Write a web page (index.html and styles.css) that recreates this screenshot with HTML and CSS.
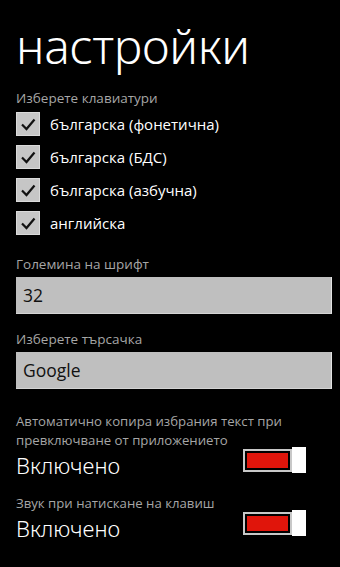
FILE: index.html
```html
<!DOCTYPE html>
<html lang="bg">
<head>
    <meta charset="UTF-8">
    <meta name="viewport" content="width=device-width, initial-scale=1.0">
    <title>настройки</title>
    <link rel="stylesheet" href="styles.css">
</head>
<body>
    <div class="page">
        <h1 class="page-title">настройки</h1>

        <div class="field-label">Изберете клавиатури</div>
        <div class="check-list">
            <label class="check-row">
                <span class="check-box"><svg viewBox="0 0 22 22"><path d="M5 11.5 L9.5 16 L17.5 6.5" /></svg></span>
                <span class="check-text">българска (фонетична)</span>
            </label>
            <label class="check-row">
                <span class="check-box"><svg viewBox="0 0 22 22"><path d="M5 11.5 L9.5 16 L17.5 6.5" /></svg></span>
                <span class="check-text">българска (БДС)</span>
            </label>
            <label class="check-row">
                <span class="check-box"><svg viewBox="0 0 22 22"><path d="M5 11.5 L9.5 16 L17.5 6.5" /></svg></span>
                <span class="check-text">българска (азбучна)</span>
            </label>
            <label class="check-row">
                <span class="check-box"><svg viewBox="0 0 22 22"><path d="M5 11.5 L9.5 16 L17.5 6.5" /></svg></span>
                <span class="check-text">английска</span>
            </label>
        </div>

        <div class="field-label">Големина на шрифт</div>
        <div class="text-box">32</div>

        <div class="field-label">Изберете търсачка</div>
        <div class="text-box">Google</div>

        <div class="toggle-group first">
            <div class="field-label">Автоматично копира избрания текст при превключване от приложението</div>
            <div class="toggle-row">
                <span class="toggle-state">Включено</span>
                <span class="toggle-switch"><span class="toggle-fill"></span><span class="toggle-thumb"></span></span>
            </div>
        </div>

        <div class="toggle-group">
            <div class="field-label">Звук при натискане на клавиш</div>
            <div class="toggle-row">
                <span class="toggle-state">Включено</span>
                <span class="toggle-switch"><span class="toggle-fill"></span><span class="toggle-thumb"></span></span>
            </div>
        </div>
    </div>
</body>
</html>
```

FILE: styles.css
```css
html, body {
    margin: 0;
    background-color: #000;
}

body {
    font-family: 'Open Sans', 'Noto Sans', sans-serif;
    color: #fff;
}

.page {
    padding: 0 8px 0 16px;
}

.page-title {
    margin: 0;
    padding-top: 20px;
    font-family: 'Noto Sans', 'Open Sans', sans-serif;
    font-size: 48px;
    font-weight: 300;
    line-height: 52px;
    letter-spacing: -0.3px;
}

.field-label {
    margin-top: 16px;
    font-size: 13.5px;
    line-height: 19px;
    color: #a6a6a6;
}

.page-title + .field-label {
    margin-top: 17px;
}

.check-list {
    display: flex;
    flex-direction: column;
    margin-top: -1px;
}

.check-row {
    display: flex;
    align-items: center;
    gap: 10px;
    height: 33px;
}

.check-box {
    width: 22px;
    height: 22px;
    background-color: #c6c6c6;
    border: 1px solid #dadada;
}

.check-box svg {
    display: block;
    width: 22px;
    height: 22px;
}

.check-box path {
    fill: none;
    stroke: #111;
    stroke-width: 2.2;
}

.check-text {
    font-size: 15px;
}

.text-box {
    box-sizing: border-box;
    height: 37px;
    margin-top: 3px;
    padding: 0 7px;
    background-color: #bfbfbf;
    border-right: 1px solid #e2e2e2;
    border-bottom: 1px solid #d4d4d4;
    color: #111;
    font-size: 17.5px;
    line-height: 36px;
}

.toggle-group .field-label {
    margin-top: 14px;
    padding-right: 40px;
    font-size: 13.2px;
}

.toggle-group.first .field-label {
    margin-top: 23px;
}

.toggle-row {
    display: flex;
    align-items: flex-start;
    justify-content: space-between;
    padding-right: 26px;
}

.toggle-state {
    font-family: 'Noto Sans', 'Open Sans', sans-serif;
    font-size: 22px;
    font-weight: 300;
    line-height: 30px;
}

.toggle-switch {
    display: flex;
    align-items: center;
    height: 26px;
    margin-top: -3px;
}

.toggle-fill {
    box-sizing: border-box;
    width: 49px;
    height: 23px;
    border: 2px solid #c8c8c8;
    outline: 2px solid #000;
    outline-offset: -4px;
    background-color: #e0150b;
}

.toggle-thumb {
    width: 14px;
    height: 26px;
    background-color: #fff;
}
```
